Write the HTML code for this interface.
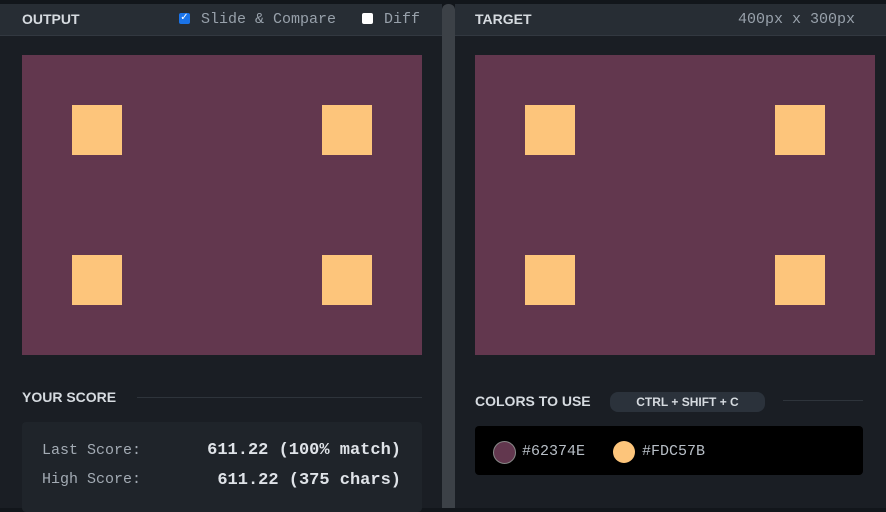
<!DOCTYPE html><html><head><style>
body{margin:0;width:886px;height:508px;background:#12161b;overflow:hidden;font-family:"Liberation Mono",monospace;position:relative}
.p{position:absolute;top:4px;height:504px;background:#1a1e24}
.h{position:absolute;left:0;right:0;top:0;height:31px;background:#272d34;border-bottom:1px solid #323840}
.t{position:absolute;top:7px;font:bold 14px "Liberation Sans",sans-serif;color:#d6dbe0}
.g{position:absolute;color:#98a1ab;font-size:15px;top:7px}
.c{position:absolute;top:55px;width:400px;height:300px;background:#62374E}
.s{position:absolute;width:50px;height:50px;background:#FDC57B}
</style></head><body>
<div class="p" style="left:0;width:442px">
<div class="h"><div class="t" style="left:22px">OUTPUT</div>
<div style="position:absolute;left:179px;top:9px;width:11px;height:11px;background:#1a73e8;border-radius:2px;color:#fff;font-size:10px;line-height:11px;text-align:center">✓</div>
<div class="g" style="left:201px">Slide &amp; Compare</div>
<div style="position:absolute;left:362px;top:9px;width:11px;height:11px;background:#fff;border-radius:2px"></div>
<div class="g" style="left:384px">Diff</div></div>
</div>
<div style="position:absolute;left:442px;top:4px;width:13px;height:504px;background:#3c4147;border-radius:6px 6px 0 0"></div>
<div class="p" style="left:455px;width:431px">
<div class="h"><div class="t" style="left:20px">TARGET</div><div class="g" style="left:283px">400px x 300px</div></div>
</div>
<div class="c" style="left:22px"><div class="s" style="left:50px;top:50px"></div><div class="s" style="left:300px;top:50px"></div><div class="s" style="left:50px;top:200px"></div><div class="s" style="left:300px;top:200px"></div></div>
<div class="c" style="left:475px"><div class="s" style="left:50px;top:50px"></div><div class="s" style="left:300px;top:50px"></div><div class="s" style="left:50px;top:200px"></div><div class="s" style="left:300px;top:200px"></div></div>
<div class="t" style="left:22px;top:389px">YOUR SCORE</div>
<div style="position:absolute;left:137px;top:397px;width:285px;height:1px;background:#2e343b"></div>
<div style="position:absolute;left:22px;top:422px;width:400px;height:90px;background:#1f242a;border-radius:4px"></div>
<div style="position:absolute;left:42px;top:442px;color:#a3abb4;font-size:15px">Last Score:</div>
<div style="position:absolute;left:42px;top:471px;color:#a3abb4;font-size:15px">High Score:</div>
<div style="position:absolute;right:485px;top:441px;color:#dfe3e8;font-size:17px;font-weight:bold">611.22 (100% match)</div>
<div style="position:absolute;right:485px;top:471px;color:#dfe3e8;font-size:17px;font-weight:bold">611.22 (375 chars)</div>
<div class="t" style="left:475px;top:393px">COLORS TO USE</div>
<div style="position:absolute;left:610px;top:392px;width:155px;height:20px;background:#2b323b;border-radius:8px;color:#d6dbe0;font:bold 12px 'Liberation Sans',sans-serif;line-height:20px;text-align:center">CTRL + SHIFT + C</div>
<div style="position:absolute;left:783px;top:400px;width:80px;height:1px;background:#2e343b"></div>
<div style="position:absolute;left:475px;top:426px;width:388px;height:49px;background:#000;border-radius:4px"></div>
<div style="position:absolute;left:493px;top:441px;width:21px;height:21px;border-radius:50%;background:#62374E;border:1px solid #888"></div>
<div style="position:absolute;left:522px;top:443px;color:#b8bfc7;font-size:15px">#62374E</div>
<div style="position:absolute;left:613px;top:441px;width:22px;height:22px;border-radius:50%;background:#FDC57B"></div>
<div style="position:absolute;left:642px;top:443px;color:#b8bfc7;font-size:15px">#FDC57B</div>
</body></html>
